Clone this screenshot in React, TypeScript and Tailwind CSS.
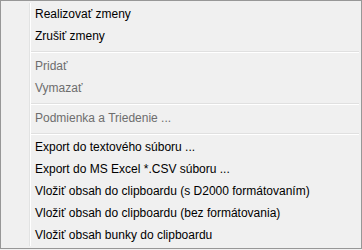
type Entry = { label: string; disabled?: boolean } | "sep";

const ITEMS: Entry[] = [
  { label: "Realizovať zmeny" },
  { label: "Zrušiť zmeny" },
  "sep",
  { label: "Pridať", disabled: true },
  { label: "Vymazať", disabled: true },
  "sep",
  { label: "Podmienka a Triedenie ...", disabled: true },
  "sep",
  { label: "Export do textového súboru ..." },
  { label: "Export do MS Excel *.CSV súboru ..." },
  { label: "Vložiť obsah do clipboardu (s D2000 formátovaním)" },
  { label: "Vložiť obsah do clipboardu (bez formátovania)" },
  { label: "Vložiť obsah bunky do clipboardu" },
];

export default function App() {
  return (
    <div className="h-[250px] w-[362px] bg-[#f0f0f0]">
      <div
        className="relative flex h-[249px] w-[362px] border border-[#979797] bg-[#f0f0f0] py-[2px] pr-[2px] text-[12px]"
        style={{ fontFamily: '"Liberation Sans", Arial, sans-serif' }}
      >
        {/* icon gutter */}
        <div className="w-[28px] shrink-0" />
        <div className="w-px shrink-0 bg-[#e2e3e3]" />
        <div className="w-px shrink-0 bg-white" />

        <div className="flex flex-1 flex-col">
          {ITEMS.map((item, i) =>
            item === "sep" ? (
              <div key={i} className="flex h-[8px] flex-col pt-[4px]">
                <div className="h-px bg-[#e0e0e0]" />
                <div className="h-px bg-white" />
              </div>
            ) : (
              <div
                key={i}
                className={
                  "flex h-[22px] items-center whitespace-nowrap pl-[4px] " +
                  (item.disabled ? "text-[#6d6d6d]" : "text-black")
                }
              >
                {item.label}
              </div>
            )
          )}
        </div>
      </div>
    </div>
  );
}
